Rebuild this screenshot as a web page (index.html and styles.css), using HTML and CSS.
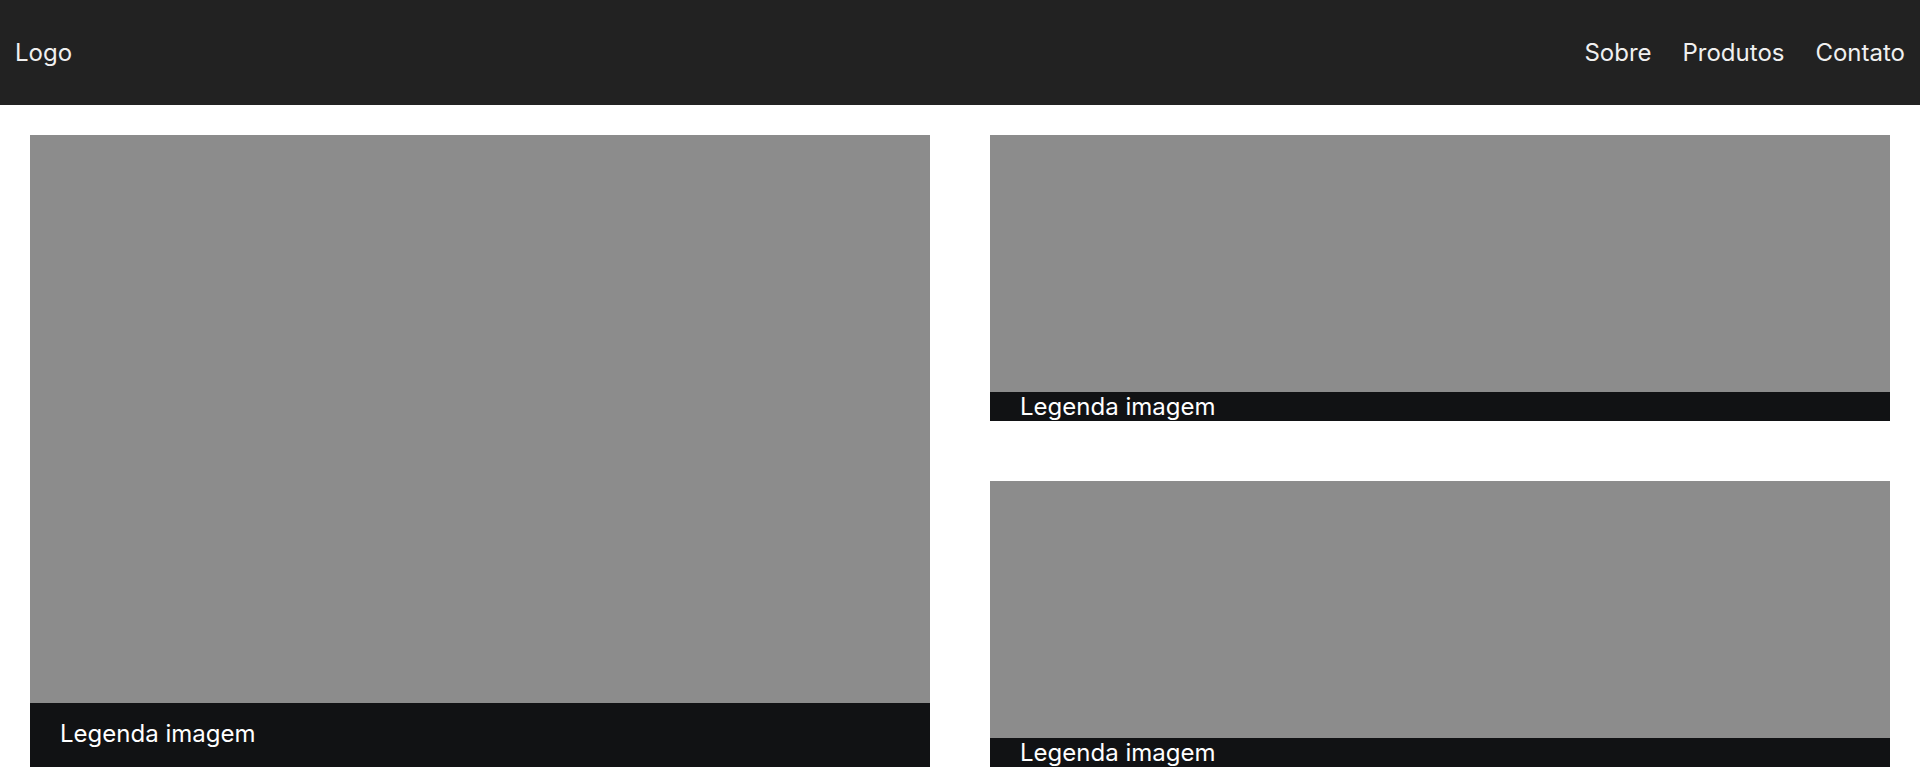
FILE: index.html
```html
<!DOCTYPE html>
<html lang="pt">
<head>
<meta charset="utf-8">
<title>Galeria</title>
<link rel="stylesheet" href="styles.css">
</head>
<body>
<header class="topbar">
  <div class="logo">Logo</div>
  <nav class="nav">
    <a href="#">Sobre</a>
    <a href="#">Produtos</a>
    <a href="#">Contato</a>
  </nav>
</header>
<main class="gallery">
  <figure class="card card-main">
    <div class="image"></div>
    <figcaption class="caption caption-big">Legenda imagem</figcaption>
  </figure>
  <figure class="card">
    <div class="image"></div>
    <figcaption class="caption">Legenda imagem</figcaption>
  </figure>
  <figure class="card">
    <div class="image"></div>
    <figcaption class="caption">Legenda imagem</figcaption>
  </figure>
</main>
</body>
</html>
```
FILE: styles.css
```css
* { box-sizing: border-box; }
body {
  margin: 0;
  background: #ffffff;
  font-family: Inter, "Liberation Sans", sans-serif;
  font-size: 24px;
}
.topbar {
  height: 105px;
  background: #222222;
  color: #f0f0f0;
  display: flex;
  align-items: center;
  justify-content: space-between;
  padding: 0 15px;
}
.logo { line-height: 29px; }
.nav {
  display: flex;
  gap: 31px;
}
.nav a {
  color: #f0f0f0;
  text-decoration: none;
}
.gallery {
  display: grid;
  grid-template-columns: 900px 900px;
  grid-template-rows: 286px 286px;
  column-gap: 60px;
  row-gap: 60px;
  padding: 30px;
}
.card {
  margin: 0;
  display: flex;
  flex-direction: column;
}
.card-main { grid-row: 1 / span 2; }
.image {
  flex: 1;
  background: #8c8c8c;
}
.caption {
  background: #111214;
  color: #ffffff;
  line-height: 29px;
  padding: 0 30px;
}
.caption-big { padding: 16px 30px 19px; }
```
